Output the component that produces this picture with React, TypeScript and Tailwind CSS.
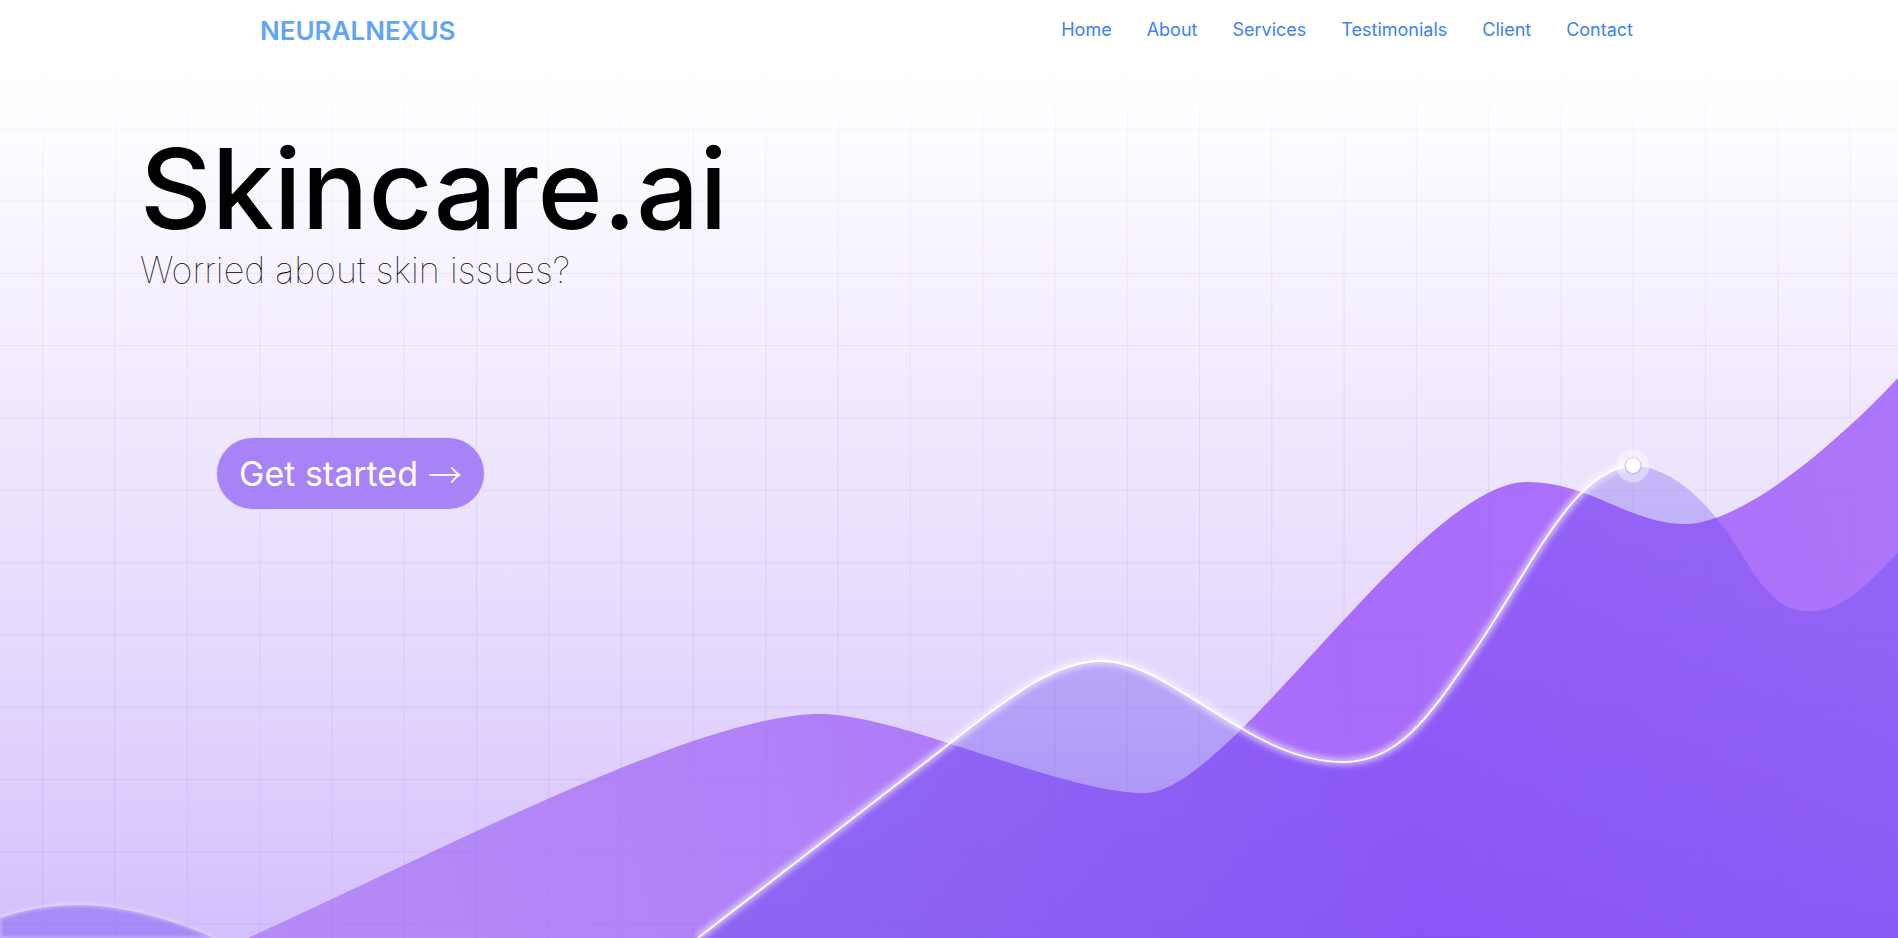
import React from "react";

const GRID_X = Array.from({ length: 26 }, (_, k) => 42.7 + 72.3 * k);
const GRID_Y = Array.from({ length: 13 }, (_, k) => 56.5 + 72.3 * k);

const P_PATH =
  "M 248 938 C 450 846, 700 714, 820 714 C 900 714, 1060 793, 1145 793 C 1230 793, 1420 482, 1527 482 C 1590 482, 1630 524, 1685 524 C 1740 524, 1830 450, 1898 378 L 1898 938 Z";

const LINE_PATH =
  "M 698 938 L 940 751 C 1000 705, 1050 661, 1102 661 C 1170 661, 1250 762, 1343 762 C 1400 762, 1430 715, 1475 650 C 1530 570, 1575 466, 1633 466";

const D_PATH =
  LINE_PATH +
  " C 1670 466, 1710 500, 1745 560 C 1775 608, 1790 611, 1812 611 C 1845 611, 1870 580, 1898 553 L 1898 938 L 698 938 Z";

const Q_PATH = "M 0 918 C 30 908, 55 905, 77 905 C 120 905, 170 918, 214 938 L 0 938 Z";

function Backdrop() {
  return (
    <svg
      className="absolute inset-0 h-full w-full"
      viewBox="0 0 1898 938"
      preserveAspectRatio="none"
    >
      <defs>
        <linearGradient id="bg" x1="0" y1="0" x2="0" y2="938" gradientUnits="userSpaceOnUse">
          <stop offset="0" stopColor="#ffffff" />
          <stop offset="0.07" stopColor="#ffffff" />
          <stop offset="0.14" stopColor="#fdfcff" />
          <stop offset="0.32" stopColor="#f5f0fe" />
          <stop offset="0.53" stopColor="#ece3fd" />
          <stop offset="0.75" stopColor="#e2d5fd" />
          <stop offset="1" stopColor="#d3bffc" />
        </linearGradient>
        <linearGradient id="pfill" x1="0" y1="938" x2="1898" y2="400" gradientUnits="userSpaceOnUse">
          <stop offset="0" stopColor="#b98ff5" />
          <stop offset="0.4" stopColor="#b081f7" />
          <stop offset="0.7" stopColor="#a86bfa" />
          <stop offset="1" stopColor="#ae76fa" />
        </linearGradient>
        <linearGradient id="dfill" x1="0" y1="450" x2="0" y2="938" gradientUnits="userSpaceOnUse">
          <stop offset="0" stopColor="rgb(85,60,235)" stopOpacity="0.26" />
          <stop offset="1" stopColor="rgb(80,45,235)" stopOpacity="0.36" />
        </linearGradient>
        <linearGradient id="gridfade" x1="0" y1="60" x2="0" y2="400" gradientUnits="userSpaceOnUse">
          <stop offset="0" stopColor="#fff" stopOpacity="0" />
          <stop offset="0.3" stopColor="#fff" stopOpacity="0.55" />
          <stop offset="1" stopColor="#fff" stopOpacity="1" />
        </linearGradient>
        <mask id="gridmask" maskUnits="userSpaceOnUse" x="0" y="0" width="1898" height="938">
          <rect x="0" y="0" width="1898" height="938" fill="url(#gridfade)" />
        </mask>
        <filter id="glow" x="-10%" y="-10%" width="120%" height="120%">
          <feGaussianBlur stdDeviation="3" />
        </filter>
        <filter id="soft" x="-10%" y="-10%" width="120%" height="120%">
          <feGaussianBlur stdDeviation="1.5" />
        </filter>
      </defs>

      <rect x="0" y="0" width="1898" height="938" fill="url(#bg)" />

      <path d={P_PATH} fill="url(#pfill)" />
      <path d={Q_PATH} fill="url(#dfill)" />
      <path d={Q_PATH} fill="none" stroke="#ffffff" strokeOpacity="0.35" strokeWidth="3" filter="url(#soft)" />
      <path d={D_PATH} fill="url(#dfill)" />

      <g mask="url(#gridmask)" stroke="#8b5cf6" strokeOpacity="0.11" strokeWidth="1">
        {GRID_X.map((x) => (
          <line key={"x" + x} x1={x} y1="56" x2={x} y2="938" />
        ))}
        {GRID_Y.map((y) => (
          <line key={"y" + y} x1="0" y1={y} x2="1898" y2={y} />
        ))}
      </g>

      <path d={LINE_PATH} fill="none" stroke="#ffffff" strokeOpacity="0.7" strokeWidth="6" filter="url(#glow)" />
      <path d={LINE_PATH} fill="none" stroke="#ffffff" strokeWidth="1.8" />

      <circle cx="1633" cy="466" r="16.5" fill="#ffffff" fillOpacity="0.4" />
      <circle cx="1633" cy="466" r="8.5" fill="#c4b5fd" />
      <circle cx="1633" cy="465.5" r="7.5" fill="#ffffff" />
    </svg>
  );
}

export default function App() {
  return (
    <div className="relative h-[938px] w-full overflow-hidden bg-white font-['Inter','Noto_Sans',sans-serif]">
      <Backdrop />
      <header className="relative flex h-[60px] items-center justify-between pl-[260px] pr-[265px]">
        <span className="text-[26px] font-semibold text-[#60a5fa]">NEURALNEXUS</span>
        <nav className="flex items-center gap-[35px] text-lg text-[#3b82f6]">
          <a>Home</a>
          <a>About</a>
          <a>Services</a>
          <a>Testimonials</a>
          <a>Client</a>
          <a>Contact</a>
        </nav>
      </header>
      <main className="relative flex flex-col items-start pl-[140px]">
        <h1 className="mt-[73px] text-[111px] font-medium leading-none text-black">Skincare.ai</h1>
        <p className="mt-[6px] text-4xl font-thin text-black">Worried about skin issues?</p>
        <button className="ml-[76px] mt-[147px] flex h-[73px] w-[269px] items-center justify-center gap-[10px] rounded-full border border-white/70 bg-[#a882f7] text-[34px] font-normal text-white">
          <span>Get started</span>
          <span className="font-['Noto_Sans_CJK_SC',sans-serif] font-light">→</span>
        </button>
      </main>
    </div>
  );
}
